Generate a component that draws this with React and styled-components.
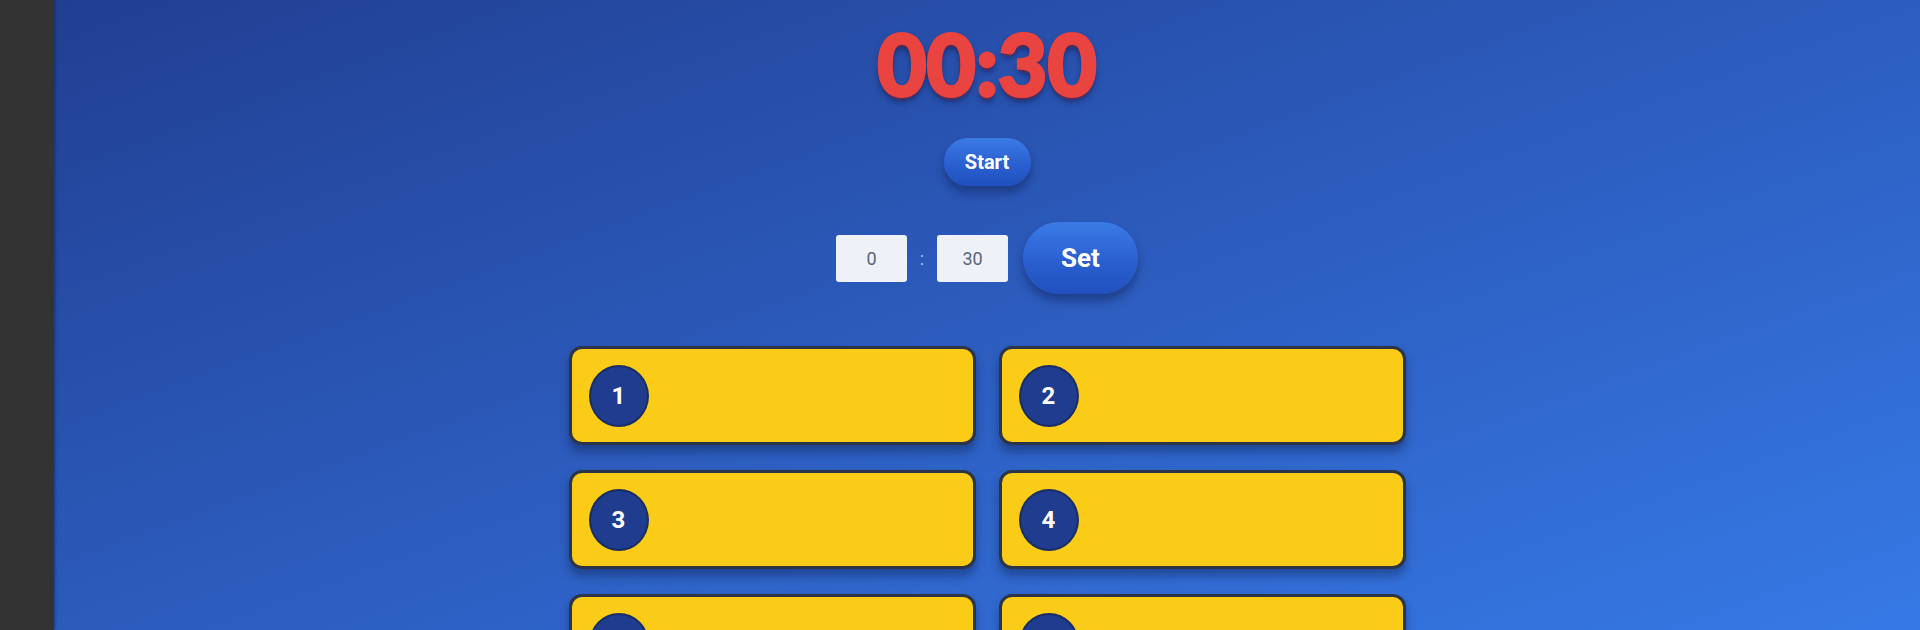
import React from "react";
import styled, { createGlobalStyle } from "styled-components";

const GlobalStyle = createGlobalStyle`
  html, body {
    margin: 0;
    padding: 0;
    height: 100%;
    overflow: hidden;
  }
  body {
    font-family: Roboto, "Noto Sans", "Liberation Sans", sans-serif;
    background: #323232;
  }
  #root {
    height: 100%;
  }
`;

const Page = styled.div`
  display: flex;
  height: 630px;
  width: 1920px;
  overflow: hidden;
`;

const Sidebar = styled.div`
  width: 54px;
  flex-shrink: 0;
  background: #333333;
  box-shadow: 1px 0 3px rgba(0, 0, 0, 0.35);
  z-index: 1;
`;

const Main = styled.div`
  flex-grow: 1;
  display: flex;
  flex-direction: column;
  align-items: center;
  padding-top: 17px;
  box-sizing: border-box;
  background: linear-gradient(160deg, #213f92 0%, #2b59b9 45%, #3679e6 100%);

  > * {
    flex-shrink: 0;
  }
`;

const Timer = styled.div`
  font-family: Lato, Roboto, "Liberation Sans", sans-serif;
  font-weight: 900;
  font-size: 85px;
  line-height: 92px;
  height: 92px;
  color: #ea4441;
  -webkit-text-stroke: 3px #ea4441;
  letter-spacing: 0px;
  text-shadow: 0 0 2px #7a2a44, 0 3px 2px #6b2a48, 0 5px 7px rgba(10, 15, 60, 0.55);
`;

const PillButton = styled.button`
  font-family: Roboto, "Liberation Sans", sans-serif;
  font-weight: 700;
  color: #ffffff;
  border: none;
  border-radius: 999px;
  background: linear-gradient(180deg, #3b7be6 0%, #2a5fd0 55%, #2150bd 100%);
  box-shadow: 0 7px 10px rgba(12, 28, 80, 0.45);
  cursor: pointer;
  width: ${(p) => p.$w}px;
  height: ${(p) => p.$h}px;
  font-size: ${(p) => p.$size}px;
  padding: 0;
  flex-shrink: 0;
`;

const StartButton = styled(PillButton)`
  margin-top: 29px;
`;

const SetRow = styled.div`
  display: flex;
  align-items: center;
  margin-top: 36px;
`;

const TimeInput = styled.input`
  width: 71px;
  height: 47px;
  box-sizing: border-box;
  border: none;
  border-radius: 3px;
  background: #eef1f8;
  text-align: center;
  font-family: Roboto, "Liberation Sans", sans-serif;
  font-size: 18px;
  color: #5b6477;
  outline: none;
`;

const Colon = styled.span`
  width: 30px;
  text-align: center;
  color: #a9bde6;
  font-size: 18px;
`;

const SetButton = styled(PillButton)`
  margin-left: 15px;
`;

const Board = styled.div`
  display: grid;
  grid-template-columns: 407px 407px;
  grid-auto-rows: 99px;
  column-gap: 23px;
  row-gap: 25px;
  margin-top: 52px;
`;

const Answer = styled.div`
  display: flex;
  align-items: center;
  padding-left: 17px;
  box-sizing: border-box;
  background: #facb17;
  border: 3px solid #2c3447;
  border-radius: 13px;
  box-shadow: 0 7px 10px rgba(10, 24, 70, 0.4);
`;

const Badge = styled.div`
  width: 60px;
  height: 62px;
  border-radius: 50%;
  background: #1f3c8e;
  border: 2px solid #1a2e66;
  box-sizing: border-box;
  display: flex;
  align-items: center;
  justify-content: center;
  color: #ffffff;
  font-family: Roboto, "Liberation Sans", sans-serif;
  font-weight: 700;
  font-size: 24px;
`;

const answers = [1, 2, 3, 4, 5, 6];

export default function App() {
  return (
    <>
      <GlobalStyle />
      <Page>
        <Sidebar />
        <Main>
          <Timer>00:30</Timer>
          <StartButton $w={87} $h={48} $size={20}>
            Start
          </StartButton>
          <SetRow>
            <TimeInput defaultValue="0" />
            <Colon>:</Colon>
            <TimeInput defaultValue="30" />
            <SetButton $w={115} $h={72} $size={26}>
              Set
            </SetButton>
          </SetRow>
          <Board>
            {answers.map((n) => (
              <Answer key={n}>
                <Badge>{n}</Badge>
              </Answer>
            ))}
          </Board>
        </Main>
      </Page>
    </>
  );
}
